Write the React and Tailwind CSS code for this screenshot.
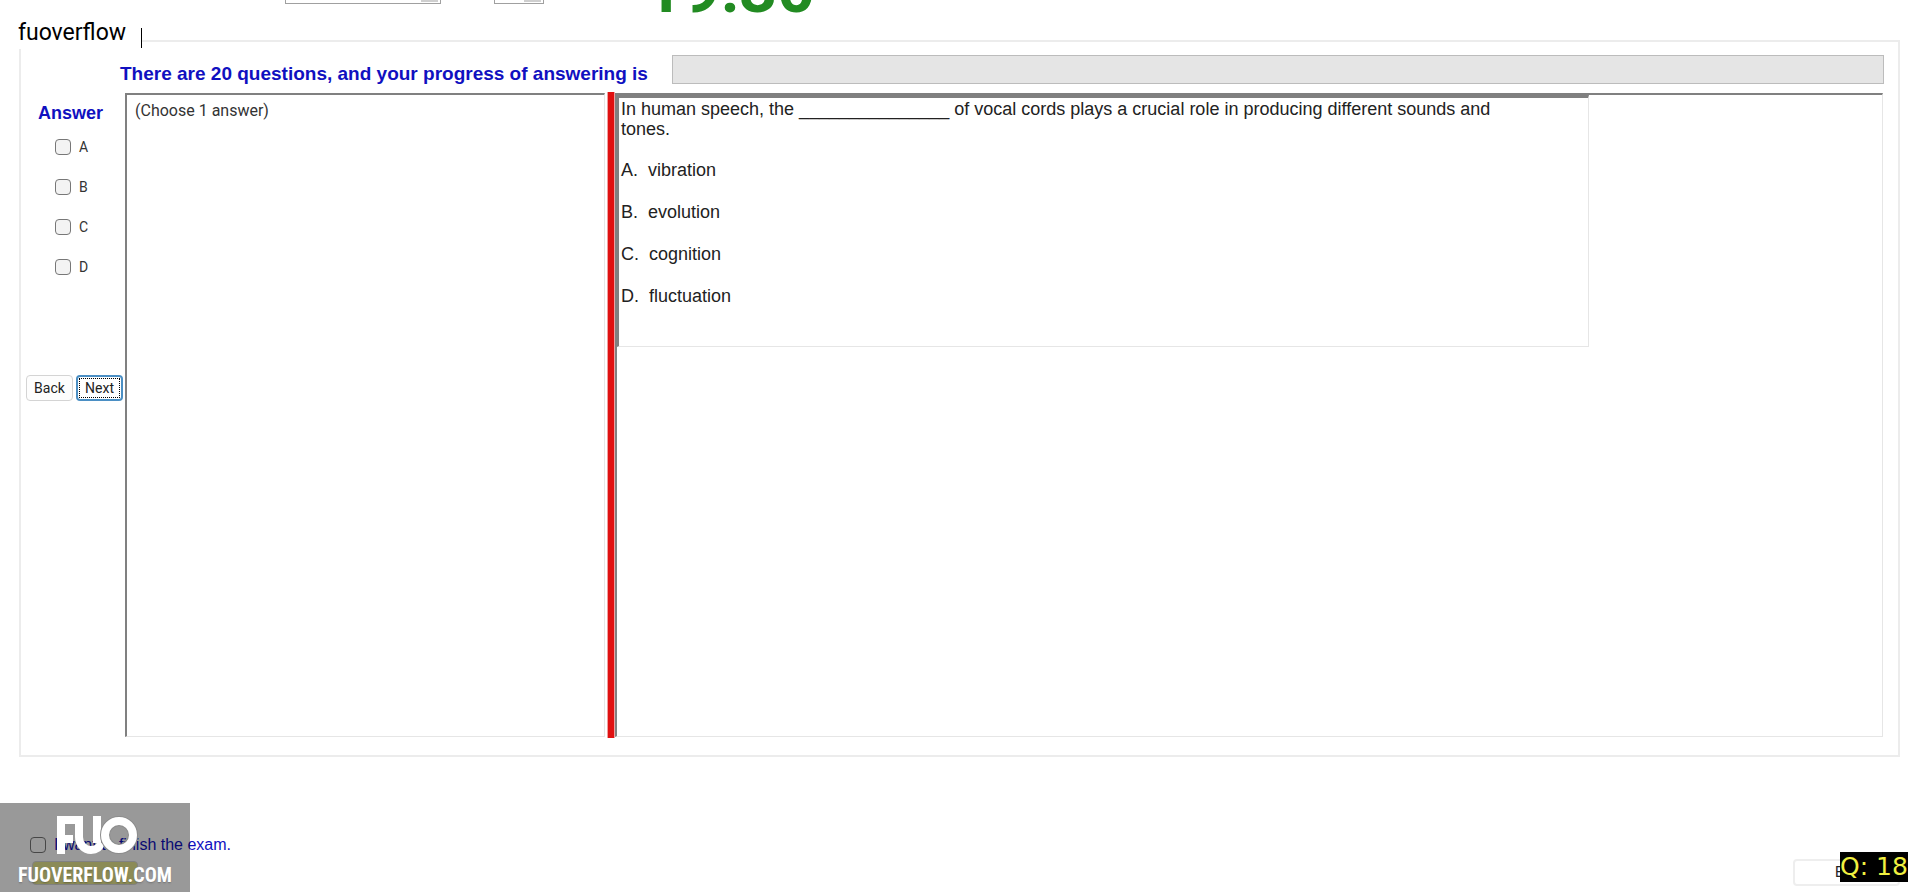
const answers = ['A', 'B', 'C', 'D'];

const options = [
  { key: 'A', text: 'vibration' },
  { key: 'B', text: 'evolution' },
  { key: 'C', text: 'cognition' },
  { key: 'D', text: 'fluctuation' },
];

const boxClass = 'size-4 shrink-0 appearance-none rounded-[4px] border border-[#777777]';

const TopBar = () => (
  <header className="h-10 shrink-0 overflow-hidden">
    <div className="-mt-14 flex items-end pl-[285px]">
      <div className="relative mb-8 w-[156px]">
        <select
          aria-label="Font"
          className="block h-8 w-full appearance-none border border-[#a0a0a0] bg-white"
        />
        <span className="pointer-events-none absolute right-[3px] bottom-[2px] h-7 w-[17px] bg-[#cfcfcf]" />
      </div>
      <div className="relative mb-8 ml-[53px] w-[50px]">
        <input
          type="text"
          aria-label="Size"
          className="block h-8 w-full border border-[#a0a0a0] bg-white"
        />
        <span className="pointer-events-none absolute right-[3px] bottom-[2px] h-7 w-[17px] bg-[#cfcfcf]" />
      </div>
      <time className="ml-[101px] font-[Roboto,sans-serif] text-[66px] leading-[92px] font-bold text-[#228b22]">
        19:30
      </time>
    </div>
  </header>
);

const AnswerColumn = () => (
  <div className="flex w-[104px] shrink-0 flex-col">
    <h2 className="pt-[9px] pl-[17px] text-[18px] leading-6 font-bold text-[#1010c0]">Answer</h2>
    <div className="mt-[10px] flex flex-col gap-4 pl-[34px]">
      {answers.map((answer) => (
        <label
          key={answer}
          className="flex h-6 items-center gap-2 font-[Roboto,sans-serif] text-[14px] text-[#333333]"
        >
          <input type="checkbox" className={`${boxClass} bg-[#f3f3f3]`} />
          {answer}
        </label>
      ))}
    </div>
    <div className="mt-24 flex gap-[3px] pl-[5px] font-[Roboto,sans-serif] text-[14px] text-[#222222]">
      <button type="button" className="h-[26px] w-[47px] rounded-[4px] border border-[#d4d4d4] bg-[#fdfdfd]">
        Back
      </button>
      <button
        type="button"
        className="h-[26px] w-[47px] rounded-[4px] border-2 border-[#4b8fc4] bg-white p-px"
      >
        <span className="flex h-full items-center justify-center border border-dotted border-black">Next</span>
      </button>
    </div>
  </div>
);

const QuestionView = () => (
  <div className="max-w-[972px] border border-t-3 border-l-2 border-[#e6e6e6] border-t-[#808080] border-l-[#808080] pt-px pb-10 pl-[2px] text-[18px] leading-[20px] text-[#222222]">
    <p className="pr-16">
      In human speech, the _______________ of vocal cords plays a crucial role in producing different sounds and
      tones.
    </p>
    <ol className="mt-[21px] flex flex-col gap-[22px]">
      {options.map((option) => (
        <li key={option.key} className="whitespace-pre">
          {option.key}.{'  '}
          {option.text}
        </li>
      ))}
    </ol>
  </div>
);

const Watermark = () => (
  <div className="absolute bottom-0 left-0 h-[89px] w-[190px] bg-black/40 text-white">
    <svg viewBox="0 0 190 66" className="block h-[66px] w-full" role="img" aria-label="FUO">
      <g fill="none" stroke="#ffffff" strokeWidth="8">
        <path d="M61 51V17H79M61 36H73" />
        <path d="M79 13V34A12 13 0 0 0 91 47Q99 47 101 40M97 13V40" />
        <circle cx="119" cy="32" r="14" stroke="#8c8c8c" strokeWidth="10" />
        <circle cx="119" cy="32" r="14" />
      </g>
    </svg>
    <p className="-mt-1 text-center font-['Roboto_Condensed','Liberation_Sans_Narrow',Roboto,sans-serif] text-[20px] leading-5 font-bold text-shadow-sm">
      FUOVERFLOW.COM
    </p>
  </div>
);

const App = () => (
  <div className="relative flex min-h-screen flex-col bg-white font-['Liberation_Sans',Arial,sans-serif]">
    <TopBar />

    <main className="mr-5 ml-[19px] flex flex-col border-2 border-[#ececec] pr-[14px] pb-[17px]">
      <div className="flex gap-[18px] pt-[13px] pl-[99px]">
        <label
          htmlFor="progress"
          className="min-w-[534px] pt-2 text-[19px] leading-[21px] font-bold whitespace-nowrap text-[#1010c0]"
        >
          There are 20 questions, and your progress of answering is
        </label>
        <div
          id="progress"
          role="progressbar"
          aria-valuenow={0}
          className="h-[29px] flex-1 border border-[#bcbcbc] bg-[#e5e5e5]"
        />
      </div>

      <div className="mt-2 mr-px flex h-[646px]">
        <AnswerColumn />
        <section className="mt-px mb-px w-[480px] shrink-0 border border-t-2 border-l-2 border-[#e6e6e6] border-t-[#808080] border-l-[#808080] p-2 font-[Roboto,sans-serif] text-[16px] leading-4 text-[#333333]">
          (Choose 1 answer)
        </section>
        <div className="ml-[2px] w-[8px] shrink-0 cursor-col-resize border-x border-[#f0a0a0] bg-[#e01010]" />
        <section className="mt-px mb-px flex-1 border border-t-2 border-l-2 border-[#e6e6e6] border-t-[#808080] border-l-[#808080]">
          <QuestionView />
        </section>
      </div>
    </main>

    <footer className="flex flex-1 items-start justify-between pt-19 pr-5 pl-[30px]">
      <div>
        <label className="flex items-center gap-2 text-[16px] leading-6 text-[#1010c0]">
          <input type="checkbox" className={boxClass} />
          I want to finish the exam.
        </label>
        <button
          type="button"
          aria-label="Finish"
          className="mt-1 ml-[2px] block h-6 w-[106px] rounded-[4px] border border-[#d8d8d8] bg-[#e8e890]"
        />
      </div>
      <button
        type="button"
        className="mt-[26px] h-[27px] w-[107px] rounded-[4px] border-2 border-[#eeeeee] bg-white font-[Roboto,sans-serif] text-[14px] text-[#222222]"
      >
        Exit
      </button>
    </footer>

    <div className="absolute top-[17px] left-0 flex h-8 w-[142px] items-center bg-white pt-px pl-[18px] font-[Roboto,sans-serif] text-[23px] text-black">
      fuoverflow
      <span className="mt-2 ml-auto h-5 w-px bg-black" />
    </div>
    <Watermark />
    <div className="absolute right-3 bottom-[10px] flex h-[30px] w-[68px] items-center justify-center bg-black font-['DejaVu_Sans',sans-serif] text-[25px] whitespace-pre text-[#f0f040]">
      Q: 18
    </div>
  </div>
);

export default App;
